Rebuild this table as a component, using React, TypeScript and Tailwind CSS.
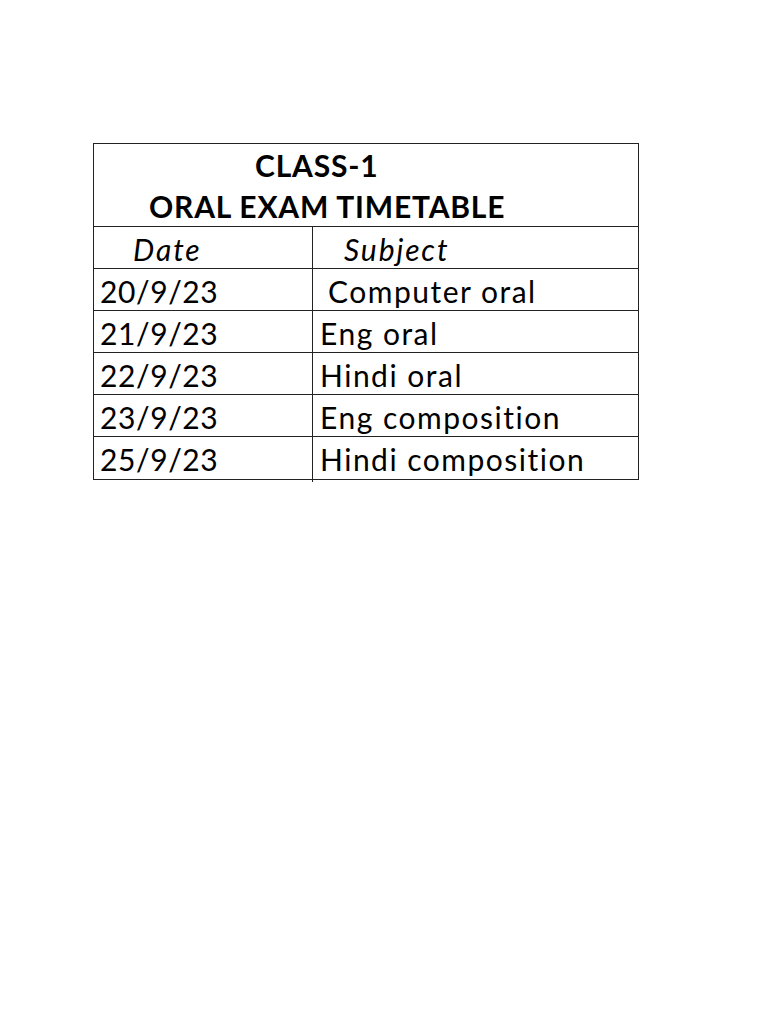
const rows = [
  { date: "20/9/23", subject: "Computer oral", indent: "pl-[15px]" },
  { date: "21/9/23", subject: "Eng oral", indent: "pl-[7px]" },
  { date: "22/9/23", subject: "Hindi oral", indent: "pl-[7px]" },
  { date: "23/9/23", subject: "Eng composition", indent: "pl-[7px]" },
  { date: "25/9/23", subject: "Hindi composition", indent: "pl-[7px]" },
];

export default function App() {
  return (
    <div
      className="w-[768px] h-[1024px] bg-white text-black pt-[143px] pl-[93px] [font-variant-ligatures:none]"
      style={{ fontFamily: "Lato, 'Open Sans', sans-serif" }}
    >
      <div className="w-[546px] border border-[#222]">
        {/* Title block */}
        <div className="h-[83px] border-b border-[#222] font-bold text-[30px] leading-[42px] tracking-[0.8px]">
          <div className="pl-[161px]">CLASS-1</div>
          <div className="pl-[55px] -mt-[1px]">ORAL EXAM TIMETABLE</div>
        </div>

        <div className="grid grid-cols-[219px_1fr] h-[42px] border-b border-[#222] text-[30px] italic tracking-[1.9px]">
          <div className="border-r border-[#222] pl-[39px] flex items-center">Date</div>
          <div className="pl-[31px] flex items-center">Subject</div>
        </div>

        {rows.map((row, i) => (
          <div
            key={row.date}
            className={`grid grid-cols-[219px_1fr] h-[42px] text-[30px] ${
              i < rows.length - 1 ? "border-b border-[#222]" : ""
            }`}
          >
            <div className="border-r border-[#222] pl-[6px] flex items-center tracking-[0.6px]">{row.date}</div>
            <div className={`${row.indent} flex items-center tracking-[1.5px]`}>{row.subject}</div>
          </div>
        ))}
      </div>
    </div>
  );
}
